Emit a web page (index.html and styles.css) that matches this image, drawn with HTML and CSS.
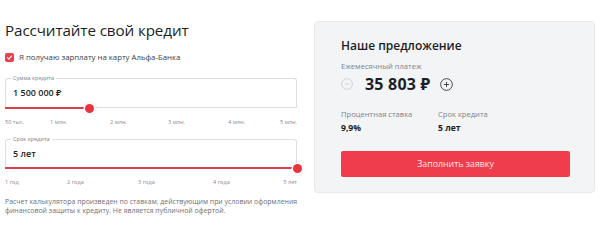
FILE: index.html
```html
<!DOCTYPE html>
<html lang="ru">
<head>
<meta charset="utf-8">
<link rel="stylesheet" href="styles.css">
</head>
<body>
<div class="page">
  <div class="calc">
    <h1 class="title">Рассчитайте свой кредит</h1>
    <label class="check">
      <span class="box"><svg viewBox="0 0 10 10" width="7" height="7"><path d="M2 5.2 L4.2 7.3 L8 2.8" fill="none" stroke="#fff" stroke-width="1.5" stroke-linecap="round" stroke-linejoin="round"/></svg></span>
      <span>Я получаю зарплату на карту Альфа-Банка</span>
    </label>

    <div class="field">
      <span class="legend">Сумма кредита</span>
      <div class="value">1 500 000 ₽</div>
      <div class="track"><div class="fill" style="width:29%"></div><div class="thumb" style="left:29%"></div></div>
    </div>
    <div class="scale scale1">
      <span>50 тыс.</span><span>1 млн.</span><span>2 млн.</span><span>3 млн.</span><span>4 млн.</span><span class="end">5 млн.</span>
    </div>

    <div class="field field2">
      <span class="legend">Срок кредита</span>
      <div class="value">5 лет</div>
      <div class="track"><div class="fill" style="width:100%"></div><div class="thumb" style="left:100%"></div></div>
    </div>
    <div class="scale scale2">
      <span>1 год</span><span>2 года</span><span>3 года</span><span>4 года</span><span class="end">5 лет</span>
    </div>

    <p class="note">Расчет калькулятора произведен по ставкам, действующим при условии оформления финансовой защиты к кредиту. Не является публичной офертой.</p>
  </div>

  <div class="offer">
    <h2 class="offer-title">Наше предложение</h2>
    <div class="muted small">Ежемесячный платеж</div>
    <div class="payment">
      <span class="circle minus"><svg viewBox="0 0 12 12" width="12" height="12"><circle cx="6" cy="6" r="5.4" fill="none" stroke="#c9ccd1" stroke-width="0.8"/><path d="M3.8 6 H8.2" stroke="#c9ccd1" stroke-width="0.8"/></svg></span>
      <span class="amount">35 803 ₽</span>
      <span class="circle plus"><svg viewBox="0 0 12 12" width="13" height="13"><circle cx="6" cy="6" r="5.4" fill="none" stroke="#2b2f38" stroke-width="0.8"/><path d="M3.6 6 H8.4 M6 3.6 V8.4" stroke="#2b2f38" stroke-width="0.8"/></svg></span>
    </div>
    <div class="stats">
      <div class="stat">
        <div class="muted">Процентная ставка</div>
        <div class="stat-value">9,9%</div>
      </div>
      <div class="stat">
        <div class="muted">Срок кредита</div>
        <div class="stat-value">5 лет</div>
      </div>
    </div>
    <button class="apply">Заполнить заявку</button>
  </div>
</div>
</body>
</html>
```
FILE: styles.css
```css
* { box-sizing: border-box; }
html, body { margin: 0; padding: 0; background: #fff; }
body {
  font-family: "Open Sans", "Noto Sans", sans-serif;
  color: #1f2229;
  width: 600px;
  height: 227px;
  overflow: hidden;
}
.page {
  display: flex;
  align-items: flex-start;
  padding: 0 5px;
  gap: 17px;
}
.calc { width: 292px; }
.title {
  margin: 20px 0 0;
  font-size: 15.2px;
  line-height: 21px;
  font-weight: 500;
  letter-spacing: -0.1px;
  color: #1b1e25;
}
.check {
  display: flex;
  align-items: center;
  gap: 5px;
  margin-top: 11px;
  font-size: 7.8px;
  line-height: 10px;
  color: #3b3e45;
}
.check .box {
  width: 9px;
  height: 9px;
  border-radius: 2px;
  background: #e9404c;
  display: flex;
  align-items: center;
  justify-content: center;
}
.field {
  position: relative;
  margin-top: 16px;
  height: 30px;
  padding: 8px 0 0 7px;
  border: 1px solid #dedfe2;
  border-bottom: none;
  border-radius: 3px 3px 0 0;
}
.legend {
  position: absolute;
  top: -4px;
  left: 5px;
  padding: 0 2px;
  background: #fff;
  font-size: 5.6px;
  line-height: 7px;
  color: #7b7e85;
}
.value {
  font-size: 9px;
  line-height: 12px;
  font-weight: 600;
  color: #1b1e25;
}
.track {
  position: absolute;
  left: -1px;
  right: -1px;
  bottom: 0;
  height: 1px;
  background: #dedfe2;
}
.fill {
  height: 1.5px;
  background: #d9404b;
}
.thumb {
  position: absolute;
  top: -3.5px;
  width: 9px;
  height: 9px;
  margin-left: -4.5px;
  border-radius: 50%;
  background: #e9333f;
  box-shadow: 0 0 0 1.5px #fff, 0 0 3px 1.5px rgba(0,0,0,0.12);
}
.scale {
  display: grid;
  margin-top: 10px;
  font-size: 5.6px;
  line-height: 8px;
  color: #888b92;
}
.scale .end { justify-self: end; }
.scale1 { grid-template-columns: 45px 60px 58px 60px 50px 1fr; }
.scale2 { grid-template-columns: 62px 71px 75px 69px 1fr; }
.field2 { margin-top: 13px; height: 29px; }
.note {
  margin: 11px -8px 0 0;
  font-size: 6.9px;
  letter-spacing: 0.02px;
  line-height: 9.3px;
  color: #6d7078;
}
.offer {
  margin-top: 21px;
  width: 281px;
  height: 172px;
  background: #f3f4f6;
  border: 1px solid #e8e9ec;
  border-radius: 4px;
  padding: 15px 25px 0 26px;
}
.offer-title {
  margin: 0;
  font-size: 12px;
  line-height: 18px;
  font-weight: 600;
  color: #1b1e25;
}
.muted {
  font-size: 7.6px;
  line-height: 10px;
  color: #80838a;
}
.small { margin-top: 6px; }
.payment {
  display: flex;
  align-items: center;
  margin-top: 3px;
  height: 20px;
}
.circle { display: flex; }
.amount {
  margin: 0 10px 0 12px;
  font-size: 16px;
  font-weight: 700;
  line-height: 20px;
  color: #1b1e25;
  letter-spacing: 0.2px;
}
.stats {
  display: flex;
  margin-top: 15px;
}
.stat { width: 97px; }
.stat-value {
  margin-top: 3.5px;
  font-size: 8.6px;
  line-height: 11px;
  font-weight: 700;
  color: #1b1e25;
}
.apply {
  display: block;
  margin-top: 17.5px;
  width: 229px;
  height: 26px;
  border: none;
  border-radius: 2px;
  background: #ef3d4c;
  color: #fde8ea;
  font-family: inherit;
  font-size: 8.8px;
}
```
